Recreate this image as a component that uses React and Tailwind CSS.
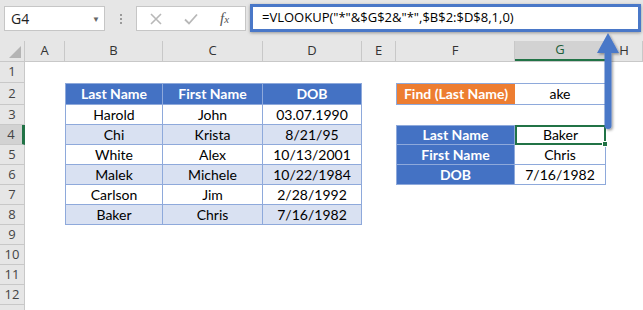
import React from "react";

const widths = ["w-[40px]", "w-[98px]", "w-[100px]", "w-[99px]", "w-[34px]", "w-[119px]", "w-[91px]", "flex-1"];
const letters = ["A", "B", "C", "D", "E", "F", "G", "H"];

const tb = "border-[#8ea9db]";
const hdr = `bg-[#4472c4] text-white font-bold border-r border-b ${tb}`;
const cell = `border-r border-b ${tb}`;
const band = `bg-[#d9e1f2] border-r border-b ${tb}`;

// each row: { n, h, cells: {colIndex: {t, c}} }
const rows = [
  { n: 1, h: "h-[21px]", cells: {} },
  {
    n: 2,
    h: "h-[22px]",
    cells: {
      1: { t: "Last Name", c: `${hdr} border-l border-t` },
      2: { t: "First Name", c: `${hdr} border-t` },
      3: { t: "DOB", c: `${hdr} border-t` },
      5: { t: "Find (Last Name)", c: `bg-[#ed7d31] text-white font-bold border-l border-t border-b ${tb}` },
      6: { t: "ake", c: `border-t border-r border-b ${tb}` },
    },
  },
  {
    n: 3,
    cells: {
      1: { t: "Harold", c: `${cell} border-l` },
      2: { t: "John", c: cell },
      3: { t: "03.07.1990", c: cell },
    },
  },
  {
    n: 4,
    sel: true,
    cells: {
      1: { t: "Chi", c: `${band} border-l` },
      2: { t: "Krista", c: band },
      3: { t: "8/21/95", c: band },
      5: { t: "Last Name", c: `${hdr} border-l border-t` },
      6: { t: "Baker", c: "border-2 border-[#217346] relative", handle: true },
    },
  },
  {
    n: 5,
    cells: {
      1: { t: "White", c: `${cell} border-l` },
      2: { t: "Alex", c: cell },
      3: { t: "10/13/2001", c: cell },
      5: { t: "First Name", c: `${hdr} border-l` },
      6: { t: "Chris", c: cell },
    },
  },
  {
    n: 6,
    cells: {
      1: { t: "Malek", c: `${band} border-l` },
      2: { t: "Michele", c: band },
      3: { t: "10/22/1984", c: band },
      5: { t: "DOB", c: `${hdr} border-l` },
      6: { t: "7/16/1982", c: cell },
    },
  },
  {
    n: 7,
    cells: {
      1: { t: "Carlson", c: `${cell} border-l` },
      2: { t: "Jim", c: cell },
      3: { t: "2/28/1992", c: cell },
    },
  },
  {
    n: 8,
    cells: {
      1: { t: "Baker", c: `${band} border-l` },
      2: { t: "Chris", c: band },
      3: { t: "7/16/1982", c: band },
    },
  },
  { n: 9, cells: {} },
  { n: 10, cells: {} },
  { n: 11, cells: {} },
  { n: 12, cells: {} },
  { n: "", cells: {} },
];

function Row({ row }) {
  return (
    <div className={`flex ${row.h || "h-[20px]"}`}>
      <div
        className={`w-[25px] shrink-0 flex items-center justify-center text-[13px] text-[#444] font-['Open_Sans'] border-b border-[#c8c8c8] ${
          row.sel ? "bg-[#d2d2d2] border-r-[3px] border-r-[#217346]" : "bg-[#e6e6e6] border-r border-r-[#c8c8c8]"
        }`}
      >
        {row.n}
      </div>
      {widths.map((w, i) => {
        const c = row.cells[i];
        return (
          <div
            key={i}
            className={`${w} shrink-0 flex items-center justify-center text-[14px] text-black leading-none ${c ? c.c : ""}`}
          >
            {c && c.t}
            {c && c.handle && (
              <span className="absolute right-[-4px] bottom-[-4px] w-[6px] h-[6px] bg-[#217346] border border-white" />
            )}
          </div>
        );
      })}
    </div>
  );
}

export default function App() {
  return (
    <div className="w-[643px] h-[310px] overflow-hidden bg-white relative font-['Lato']">
      {/* formula bar */}
      <div className="h-[41px] bg-[#e6e6e6] flex items-start pl-[4px] pt-[6px] font-['Open_Sans']">
        <div className="w-[101px] h-[25px] bg-white border border-[#c6c6c6] flex items-center justify-between pl-[6px] pr-[4px] text-[14px] text-[#222]">
          <span>G4</span>
          <span className="text-[8px] text-[#666]">▼</span>
        </div>
        <div className="w-[31px] h-[25px] flex flex-col items-center justify-center gap-[2px]">
          <span className="w-[2px] h-[2px] bg-[#9a9a9a]" />
          <span className="w-[2px] h-[2px] bg-[#9a9a9a]" />
          <span className="w-[2px] h-[2px] bg-[#9a9a9a]" />
        </div>
        <div className="w-[110px] h-[25px] bg-white border border-[#c6c6c6] flex items-center text-[#bdbdbd]">
          <svg width="12" height="12" viewBox="0 0 12 12" className="ml-[13px]">
            <path d="M1 1L11 11M11 1L1 11" stroke="#b8b8b8" strokeWidth="1.6" fill="none" />
          </svg>
          <svg width="14" height="12" viewBox="0 0 14 12" className="ml-[22px]">
            <path d="M1 6.5L5 10.5L13 1.5" stroke="#b8b8b8" strokeWidth="1.8" fill="none" />
          </svg>
          <span className="ml-[22px] font-['Liberation_Serif'] italic text-[15px] text-[#555]">
            f<span className="text-[11px]">x</span>
          </span>
        </div>
        <div className="ml-[4px] mt-[-2px] w-[391px] h-[28px] bg-white border-[3px] border-[#4a78c8] shadow-[0_1px_3px_rgba(0,0,0,0.35)] flex items-center pl-[9px] text-[13px] text-black">
          =VLOOKUP("*"&amp;$G$2&amp;"*",$B$2:$D$8,1,0)
        </div>
      </div>

      {/* column headers */}
      <div className="flex h-[21px] bg-[#e6e6e6] border-b border-[#c8c8c8] font-['Open_Sans'] text-[13px] text-[#333]">
        <div className="w-[25px] shrink-0 border-r border-[#c8c8c8] flex items-end justify-end pr-[3px] pb-[3px]">
          <span className="w-0 h-0 border-l-[12px] border-l-transparent border-b-[12px] border-b-[#b4b4b4]" />
        </div>
        {letters.map((l, i) => (
          <div
            key={l}
            className={`${widths[i]} shrink-0 flex items-center justify-center ${
              l === "G"
                ? "bg-[#d2d2d2] text-[#1d5e38] border-b-2 border-[#217346] border-r border-r-[#c8c8c8]"
                : "border-r border-[#c8c8c8]"
            }`}
          >
            {l}
          </div>
        ))}
      </div>

      {rows.map((r, i) => (
        <Row key={i} row={r} />
      ))}

      {/* callout arrow */}
      <svg className="absolute left-[590px] top-[28px]" width="40" height="106" viewBox="590 28 40 106">
        <defs>
          <filter id="sh" x="-50%" y="-20%" width="200%" height="140%">
            <feDropShadow dx="1.5" dy="1.5" stdDeviation="1.2" floodColor="#000" floodOpacity="0.35" />
          </filter>
        </defs>
        <g filter="url(#sh)">
          <path d="M608 33 L619 53 L611.5 53 L611.5 126 Q611.5 129 608 129 Q604.5 129 604.5 126 L604.5 53 L597 53 Z" fill="#4a78c8" />
        </g>
      </svg>
    </div>
  );
}
